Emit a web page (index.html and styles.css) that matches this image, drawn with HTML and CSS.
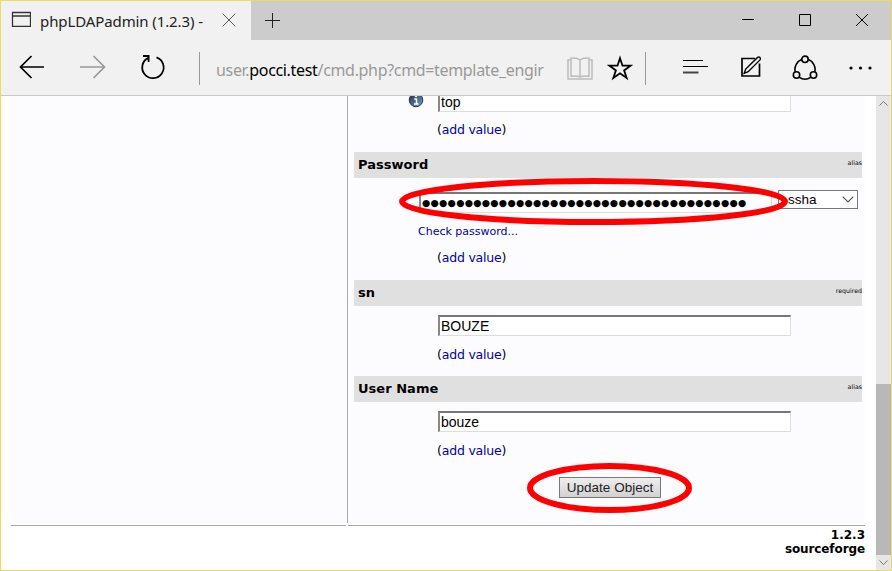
FILE: index.html
```html
<!DOCTYPE html>
<html lang="en">
<head>
<meta charset="utf-8">
<title>phpLDAPadmin (1.2.3) -</title>
<link rel="stylesheet" href="styles.css">
</head>
<body>
<div class="window">
  <header class="tabs">
    <div class="tab">
      <svg class="tab-icon" width="20" height="16" viewBox="0 0 20 16" fill="none" stroke="#333"><path d="M1.500 1.500h18v14h-18zM1.500 5h18" stroke-width="1.3"/></svg>
      <span class="tab-title">phpLDAPadmin (1.2.3) -</span>
      <svg class="tab-close" width="14" height="14" viewBox="0 0 14 14" stroke="#555"><path d="M.7.7l12.6 12.6M13.3.7L.7 13.3"/></svg>
    </div>
    <svg class="tab-new" width="15" height="15" viewBox="0 0 15 15" stroke="#222"><path d="M0 7.5h15M7.5 0v15"/></svg>
    <div class="controls">
      <svg width="12" height="12" viewBox="0 0 12 12" stroke="#000"><path d="M0 5.5h12"/></svg>
      <svg width="12" height="12" viewBox="0 0 12 12" stroke="#000" fill="none"><path d="M.5.5h11v11H.5z"/></svg>
      <svg width="12" height="12" viewBox="0 0 12 12" stroke="#000"><path d="M0 0l12 12M12 0L0 12"/></svg>
    </div>
  </header>
  <nav class="toolbar">
    <svg class="back" width="26" height="24" viewBox="0 0 26 24" fill="none" stroke="#000" stroke-width="1.7"><path d="M12.5 1L1.5 12l11 11M1.5 12H25"/></svg>
    <svg class="forward" width="26" height="24" viewBox="0 0 26 24" fill="none" stroke="#999" stroke-width="1.7"><path d="M13.5 1l11 11-11 11M24.500 12H0"/></svg>
    <svg class="reload" width="26" height="26" viewBox="0 0 26 26" fill="none" stroke="#000" stroke-width="1.8"><path d="M8.200 3.900A10.700 10.700 0 1 0 16.500 3.400M3 2h5.600v6"/></svg>
    <i class="rule"></i>
    <div class="url"><span>user.</span><b>pocci.test</b><span>/cmd.php?cmd=template_engir</span></div>
    <svg class="book" width="26" height="24" viewBox="0 0 26 24" fill="none" stroke="#bcbcbc" stroke-width="1.500"><path d="M4 3H1v19h24V3h-3M13 3v17M13 20c-2-1-5-1.200-9-.8V1.200c4-.4 7 0 9 1.800 2-1.800 5-2.200 9-1.800v18c-4-.4-7-.2-9 .8z"/></svg>
    <svg class="star" width="26" height="26" viewBox="0 0 26 26" fill="none" stroke="#000" stroke-width="1.8"><path d="M13 3.200l2.500 7.500H23.600l-6.500 4.700 2.500 7.600L13 18.300 6.400 23l2.500-7.600-6.500-4.700h8.100z"/></svg>
    <i class="rule rule-right"></i>
    <svg class="hub" width="25" height="16" viewBox="0 0 25 16"><path d="M0 1.500h20M0 7.500h25" stroke="#000"/><path d="M0 13.500h15.500" stroke="#444" stroke-width="2"/></svg>
    <svg class="note" width="22" height="22" viewBox="0 0 22 22" fill="none" stroke="#000" stroke-width="1.7"><path d="M15 2.500H2V20h17.500V7.500"/><path d="M4.200 17.300l1.500-4.200L17.600 1.400c1.800-1.200 3.600.8 2.400 2.500L8.200 15.700z" fill="#f1f1f1" stroke-width="1.400"/></svg>
    <svg class="share" width="26" height="26" viewBox="0 0 26 26" fill="none" stroke="#000" stroke-width="1.600"><path d="M9.500 4.600A10.600 10.600 0 0 0 3.200 16.800M16.500 4.600A10.600 10.600 0 0 1 22.800 16.800M7.300 22.400a10.600 10.600 0 0 0 11.400 0"/><circle cx="13" cy="4.300" r="3.200"/><circle cx="4.500" cy="20" r="3.200"/><circle cx="21.500" cy="20" r="3.200"/></svg>
    <svg class="more" width="23" height="4" viewBox="0 0 23 4"><circle cx="2" cy="2" r="1.600"/><circle cx="11.500" cy="2" r="1.600"/><circle cx="21" cy="2" r="1.600"/></svg>
  </nav>
  <div class="viewport">
    <div class="document">
      <div class="columns">
        <aside class="tree"></aside>
        <main class="form">
          <section class="first">
            <div class="row">
              <svg class="info" width="16" height="16" viewBox="0 0 16 16"><defs><linearGradient id="blue" x2="1" y2="1"><stop stop-color="#1c2e48"/><stop offset="1" stop-color="#7c9fc4"/></linearGradient></defs><circle cx="8" cy="8" r="6.800" fill="url(#blue)" stroke="#2c3b50"/><path d="M6.300 7H8.500v4.500M6 12h4.500" fill="none" stroke="#fff" stroke-width="1.500"/><circle cx="8" cy="4" r="1.200" fill="#fff"/></svg>
              <div class="field">top</div>
            </div>
            <div class="add">(<a>add value</a>)</div>
          </section>
          <section class="password">
            <h2>Password<small>alias</small></h2>
            <div class="row">
              <div class="field dots">●●●●●●●●●●●●●●●●●●●●●●●●●●●●●●●●●●●●●●</div>
              <div class="select">ssha<svg width="12" height="7" viewBox="0 0 12 7" fill="none" stroke="#555" stroke-width="1.200"><path d="M.7.700L6 6 11.300.700"/></svg></div>
              <svg class="ring" width="390" height="48" viewBox="0 0 390 48"><ellipse cx="194.500" cy="23.500" rx="191.500" ry="20.500"/></svg>
            </div>
            <div class="check"><a>Check password...</a></div>
            <div class="add">(<a>add value</a>)</div>
          </section>
          <section>
            <h2>sn<small>required</small></h2>
            <div class="row"><div class="field">BOUZE</div></div>
            <div class="add">(<a>add value</a>)</div>
          </section>
          <section>
            <h2>User Name<small>alias</small></h2>
            <div class="row"><div class="field">bouze</div></div>
            <div class="add">(<a>add value</a>)</div>
          </section>
          <div class="submit"><span class="button">Update Object</span><svg class="ring" width="166" height="50" viewBox="0 0 166 50"><ellipse cx="82.500" cy="25" rx="79.500" ry="22"/></svg></div>
        </main>
      </div>
      <footer><i class="line left"></i><i class="line right"></i></footer>
      <div class="version">1.2.3</div>
      <div class="brand">sourceforge</div>
    </div>
    <div class="scrollbar">
      <svg width="9" height="5" viewBox="0 0 9 5" fill="none" stroke="#777"><path d="M.5 4.500l4-4 4 4"/></svg>
      <div class="thumb"></div>
      <svg width="9" height="5" viewBox="0 0 9 5" fill="none" stroke="#777"><path d="M.5.500l4 4 4-4"/></svg>
    </div>
  </div>
</div>
</body>
</html>
```
FILE: styles.css
```css
* { box-sizing: border-box; }
body { margin: 0; overflow: hidden; }
svg { display: block; flex: none; }
.window { width: 892px; height: 571px; border: 1px solid #e8dc61; background: #fff; display: flex; flex-direction: column; }
.tabs { height: 39px; background: #ccc; display: flex; flex: none; }
.tab { width: 250px; background: #f1f1f1; display: flex; padding-left: 10px; }
.tab-icon { margin-top: 10px; }
.tab-title { font: 15px/20px "Noto Sans", sans-serif; color: #222; margin: 10px 0 0 9px; width: 182px; white-space: nowrap; letter-spacing: -.1px; }
.tab-close { margin-top: 12px; }
.tab-new { margin: 12px 0 0 14px; }
.controls { margin: 13px 23px 0 auto; display: flex; gap: 45px; }
.toolbar { height: 56px; background: #f1f1f1; border-bottom: 1px solid #c8c8c8; display: flex; align-items: flex-start; flex: none; }
.back { margin: 15px 0 0 18px; }
.forward { margin: 15px 0 0 35px; }
.reload { margin: 14px 0 0 34px; }
.rule { width: 1px; height: 33px; background: #999; margin: 12px 0 0 33px; }
.url { width: 330px; margin: 17px 0 0 16px; font: 16px/26px "Noto Sans", sans-serif; color: #999; white-space: nowrap; letter-spacing: -.33px; }
.url b { font-weight: 400; color: #000; }
.book { margin: 17px 0 0 21px; }
.star { margin: 15px 0 0 14px; }
.rule-right { margin-left: 12px; }
.hub { margin: 19px 0 0 37px; }
.note { margin: 16px 0 0 32px; }
.share { margin: 15px 0 0 30px; }
.more { margin: 26px 0 0 31px; }
.viewport { flex: 1; display: flex; min-height: 0; }
.document { width: 875px; padding: 0 11px 0 10px; font-family: "DejaVu Sans", sans-serif; color: #000; }
.columns { height: 427px; display: flex; }
.tree { width: 337px; border-right: 1px solid #aaa5c2; background: #fcfcfe; }
.form { width: 516px; margin-left: 1px; padding: 0 3px 0 5px; background: #fcfcfe; }
section { height: 96px; }
.first { height: 56px; }
.password { height: 128px; }
h2 { margin: 0; height: 26px; width: 508px; background: #e0e0e0; padding-left: 4px; font-size: 13px; line-height: 26px; letter-spacing: .03px; display: flex; justify-content: space-between; }
small { font-size: 6.200px; line-height: 21px; font-weight: 400; }
.row { display: flex; padding: 9px 0 0 84px; position: relative; }
.field { width: 353px; height: 21px; background: #fff; border: 1px solid #ddd; border-top: 2px solid #777; border-left: 2px solid #888; padding-left: 1px; font: 14px/18px "Liberation Sans", sans-serif; white-space: nowrap; }
.first .row { padding: 0 0 0 54px; height: 16px; align-items: flex-start; }
.first .info { margin: -4px 14px 0 0; clip-path: inset(4px 0 0); }
.first .field { height: 16px; border-top: 0; line-height: 13px; }
.add { margin: 9px 0 0 83px; font-size: 12.500px; line-height: 20px; height: 20px; letter-spacing: -.2px; }
.first .add { margin-top: 8px; }
a { color: #00a; }
.password .row { padding: 14px 0 0 65px; height: 35px; }
.password .select { width: 80px; height: 19px; margin: -2px 0 0 6px; border: 1px solid #777; background: #fff; padding: 0 3px 0 9px; display: flex; align-items: center; justify-content: space-between; font: 13.500px/16px "Liberation Sans", sans-serif; }
.field.dots { font: 9.500px/17px "DejaVu Sans", sans-serif; letter-spacing: .25px; }
.ring { position: absolute; overflow: visible; fill: none; stroke: #f00; stroke-width: 6px; pointer-events: none; }
.password .ring { left: 45px; top: 0; }
.check { font-size: 11px; line-height: 18px; margin: 10px 0 0 64px; height: 18px; }
.password .check + .add { margin-top: 7px; }
.submit { position: relative; margin: 5px 0 0 205px; width: 102px; }
.button { display: block; height: 21px; border: 1px solid #777; background: linear-gradient(#eee, #d2d2d2); font: 13.500px/19px "Liberation Sans", sans-serif; text-align: center; color: #222; white-space: nowrap; }
.submit .ring { left: -32px; top: -14px; }
footer { display: flex; justify-content: space-between; height: 1px; margin-top: 2px; }
.line { height: 1px; background: #aaa5c2; }
.left { width: 335px; }
.right { width: 517px; }
.version { text-align: right; font-weight: 700; font-size: 12px; line-height: 18px; }
.brand { text-align: right; font: 700 12px/11px "DejaVu Sans", sans-serif; letter-spacing: -.1px; }
.scrollbar { width: 15px; background: #e6e6e6; display: flex; flex-direction: column; align-items: center; padding: 5px 0; }
.thumb { width: 15px; height: 171px; background: #b8b8b8; margin: auto 0 5px; }
```
